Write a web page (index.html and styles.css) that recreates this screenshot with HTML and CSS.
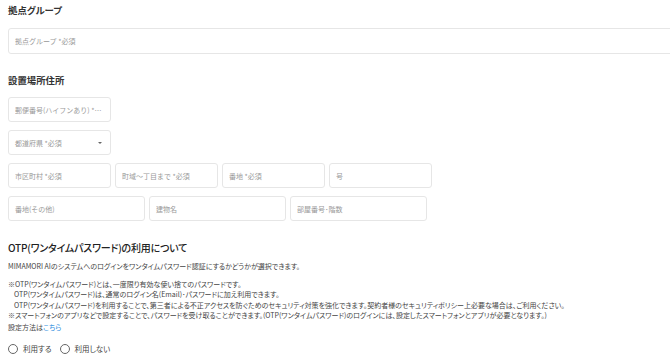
FILE: index.html
```html
<!DOCTYPE html>
<html lang="ja">
<head>
  <meta charset="UTF-8" />
  <meta name="viewport" content="width=device-width, initial-scale=1.0"/>
  <title>拠点設定</title>
  <link rel="stylesheet" href="styles.css">
</head>
<body>
  <div class="form">
    <!-- 拠点グループ -->
    <h2 class="title title-first">拠点グループ</h2>
    <div class="clip">
      <input type="text" class="field field-full" placeholder="拠点グループ *必須" />
    </div>

    <!-- 設置場所住所 -->
    <h2 class="title">設置場所住所</h2>
    <div class="rows">
      <div class="row">
        <input type="text" class="field field-s" placeholder="郵便番号(ハイフンあり) *必須" />
      </div>
      <div class="row">
        <div class="select field-s">
          <span class="select-text">都道府県 *必須</span>
          <span class="caret"></span>
        </div>
      </div>
      <div class="row">
        <input type="text" class="field field-s" placeholder="市区町村 *必須" />
        <input type="text" class="field field-s" placeholder="町域～丁目まで *必須" />
        <input type="text" class="field field-s" placeholder="番地 *必須" />
        <input type="text" class="field field-s" placeholder="号" />
      </div>
      <div class="row">
        <input type="text" class="field field-m" placeholder="番地(その他)" />
        <input type="text" class="field field-m" placeholder="建物名" />
        <input type="text" class="field field-m" placeholder="部屋番号･階数" />
      </div>
    </div>

    <!-- OTP -->
    <h2 class="title title-otp">OTP(ワンタイムパスワード)の利用について</h2>
    <p class="desc">MIMAMORI AIのシステムへのログインをワンタイムパスワード認証にするかどうかが選択できます。</p>
    <div class="notes">
      <p>※OTP(ワンタイムパスワード)とは、一度限り有効な使い捨てのパスワードです。</p>
      <p class="indent">OTP(ワンタイムパスワード)は、通常のログイン名(Email)･パスワードに加え利用できます。</p>
      <p class="indent">OTP(ワンタイムパスワード)を利用することで、第三者による不正アクセスを防ぐためのセキュリティ対策を強化できます。契約者様のセキュリティポリシー上必要な場合は、ご利用ください。</p>
      <p>※スマートフォンのアプリなどで設定することで、パスワードを受け取ることができます。(OTP(ワンタイムパスワード)のログインには、設定したスマートフォンとアプリが必要となります。)</p>
      <p class="howto">設定方法は<a href="#" class="link">こちら</a></p>
    </div>

    <div class="radios">
      <label class="radio"><span class="dot"></span>利用する</label>
      <label class="radio"><span class="dot"></span>利用しない</label>
    </div>
  </div>
</body>
</html>
```

FILE: styles.css
```css
html {
  overflow: hidden;
}

body {
  margin: 0;
  background: #fff;
  color: #333;
  font-family: "Noto Sans CJK JP", "Noto Sans", sans-serif;
  font-feature-settings: "palt";
}

.form {
  padding: 3px 0 0 8px;
}

.clip {
  overflow: hidden;
}

.title {
  margin: 19px 0 10px;
  font-size: 9.4px;
  line-height: 14px;
  font-weight: 700;
  color: #333;
}

.title-first {
  margin: 0 0 11px;
}

.field {
  box-sizing: border-box;
  height: 25px;
  margin: 0;
  padding: 0 6px;
  border: 1px solid #e6e6e6;
  border-radius: 3px;
  background: #fff;
  font-family: inherit;
  font-size: 7px;
  color: #333;
  outline: none;
  text-overflow: ellipsis;
}

.field::placeholder {
  color: #999;
}

.field-full {
  display: block;
  width: 700px;
  height: 26px;
}

.field-s {
  width: 103px;
}

.field-m {
  width: 137px;
}

.rows {
  display: flex;
  flex-direction: column;
  gap: 8px;
}

.row {
  display: flex;
  gap: 4px;
}

.select {
  box-sizing: border-box;
  height: 25px;
  padding: 0 6px;
  border: 1px solid #e6e6e6;
  border-radius: 3px;
  display: flex;
  align-items: center;
  justify-content: space-between;
  font-size: 7px;
  color: #999;
}

.caret {
  width: 0;
  height: 0;
  margin-right: 2px;
  border-left: 2px solid transparent;
  border-right: 2px solid transparent;
  border-top: 2.5px solid #666;
}

.title-otp {
  margin: 19px 0 5px;
  font-size: 10px;
  line-height: 16px;
  font-weight: 500;
  letter-spacing: -0.2px;
  color: #222;
}

.desc {
  margin: 0 0 8px;
  font-size: 7px;
  line-height: 10px;
  color: #444;
}

.notes p {
  margin: 0;
  font-size: 7px;
  line-height: 10.3px;
  color: #444;
}

.notes .indent {
  padding-left: 6px;
}

.notes .howto {
  margin-top: 2px;
}

.link {
  color: #2f8fe0;
  text-decoration: none;
}

.radios {
  display: flex;
  gap: 8px;
  margin-top: 11px;
  font-size: 7.5px;
  line-height: 12px;
  color: #444;
}

.radio {
  display: flex;
  align-items: center;
  gap: 5px;
}

.dot {
  box-sizing: border-box;
  width: 10px;
  height: 10px;
  border: 1px solid #666;
  border-radius: 50%;
  background: #fff;
}
```
